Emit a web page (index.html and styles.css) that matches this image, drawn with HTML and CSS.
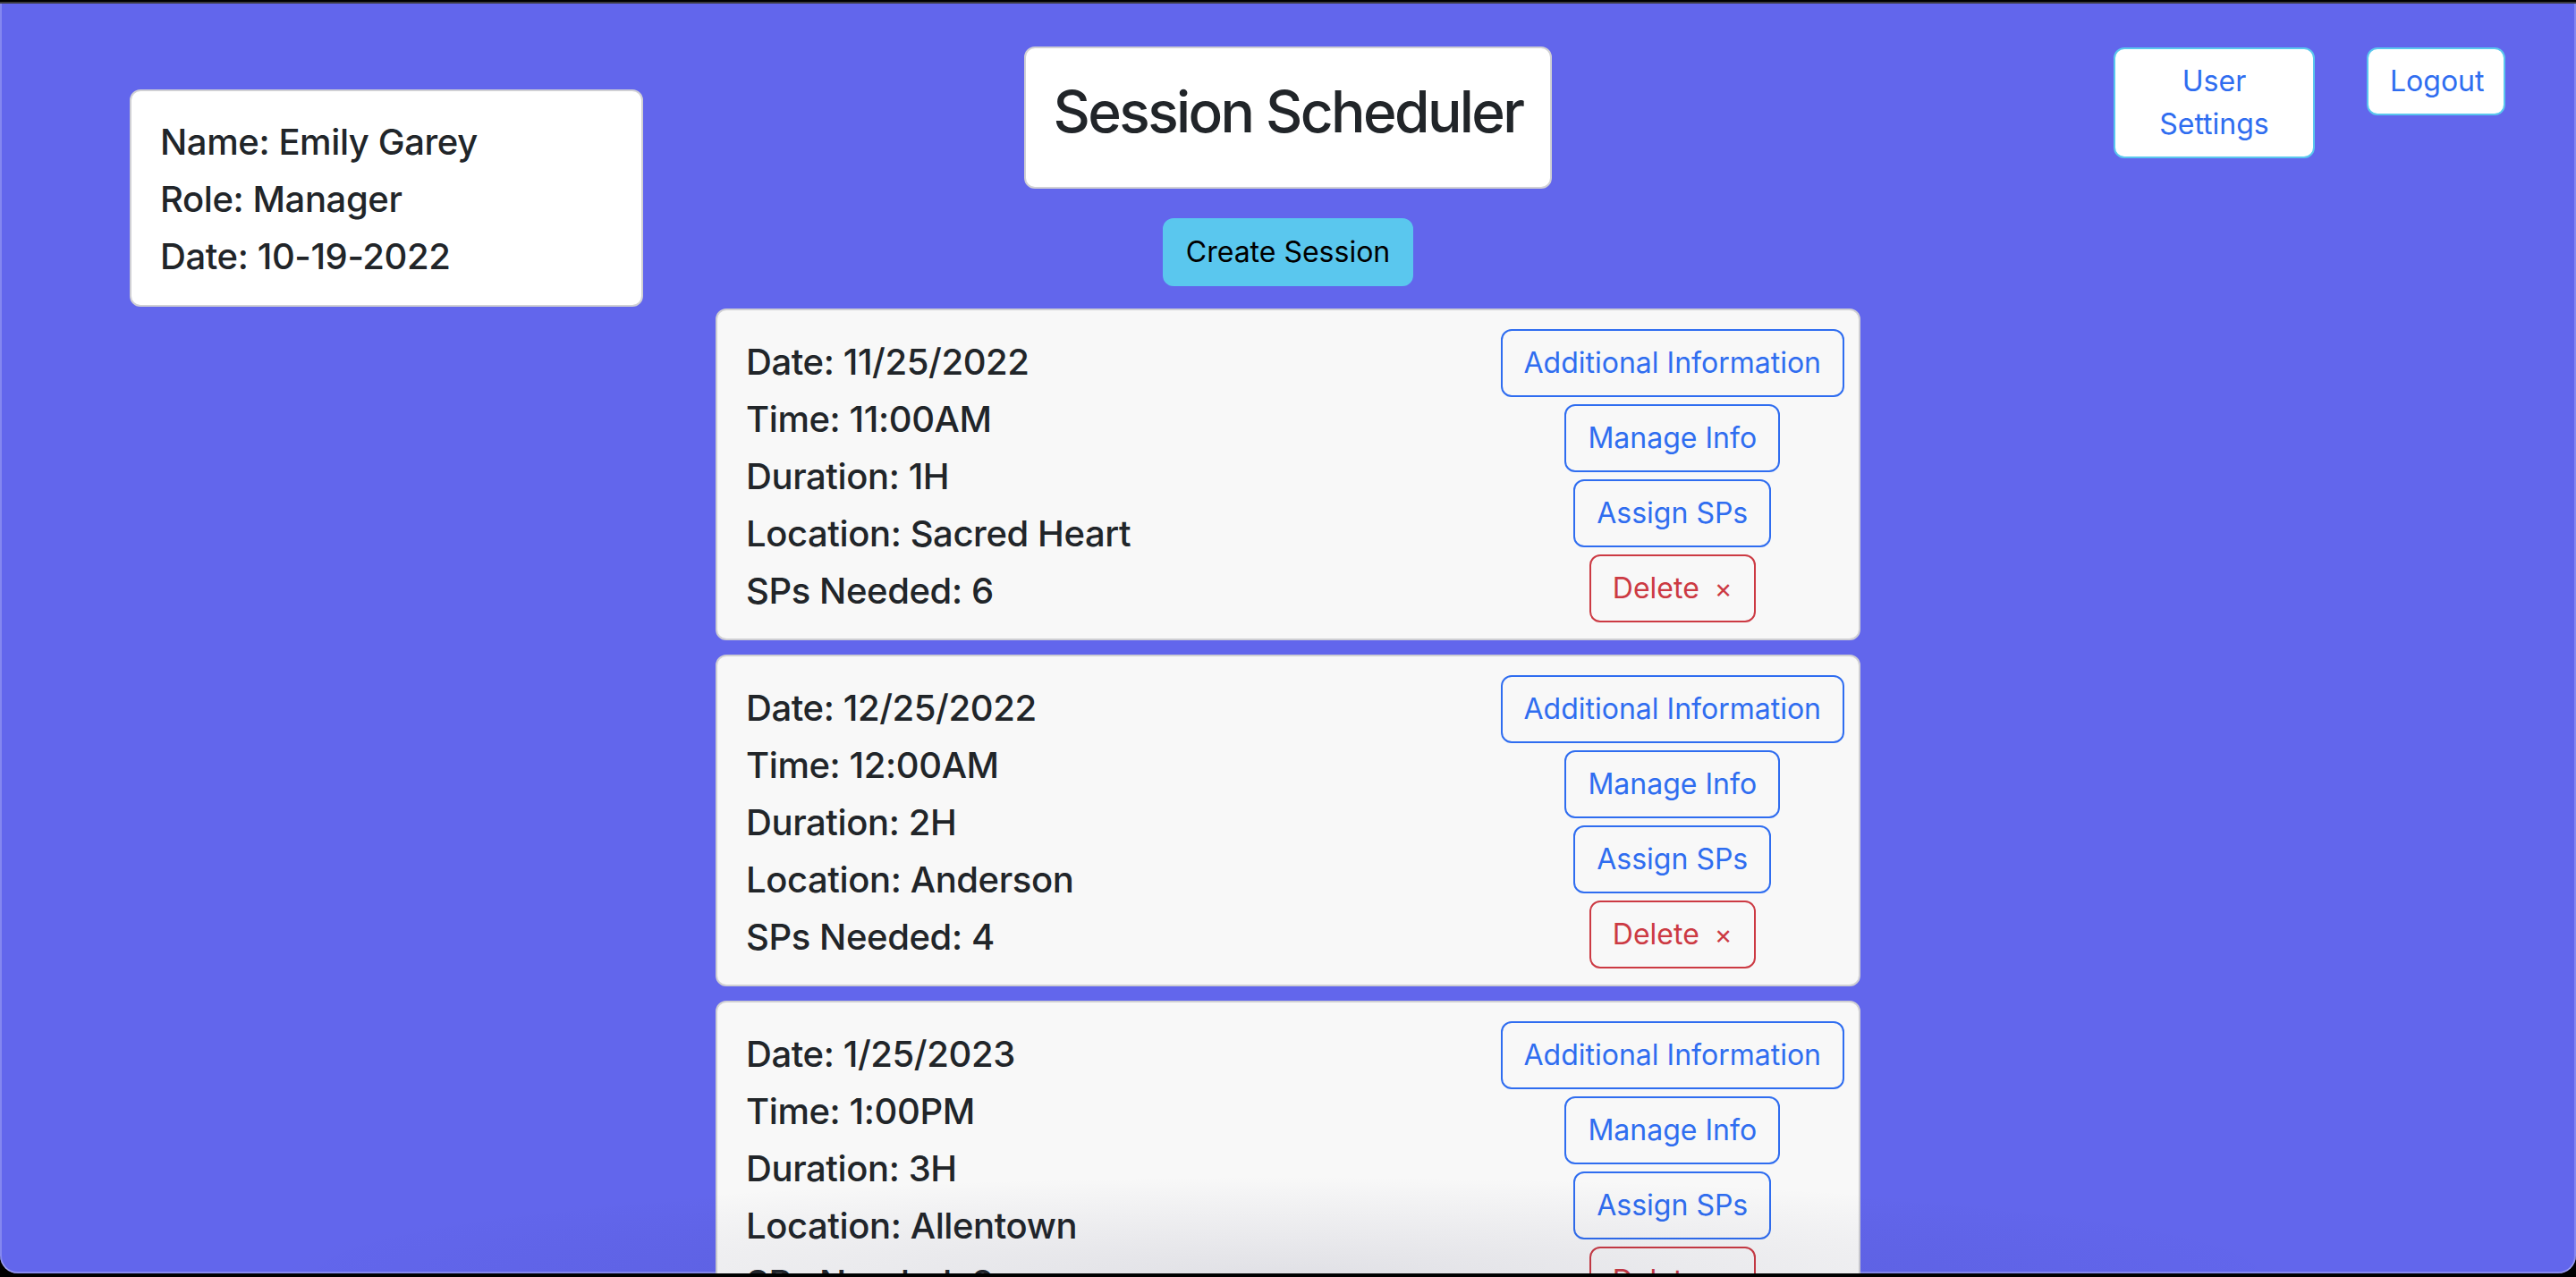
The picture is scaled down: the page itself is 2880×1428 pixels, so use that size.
FILE: index.html
```html
<!DOCTYPE html>
<html lang="en">
<head>
<meta charset="utf-8">
<title>Session Scheduler</title>
<link rel="stylesheet" href="styles.css">
</head>
<body>
<div class="frame">
  <div class="window">
    <div class="layout">
      <aside class="col-left">
        <div class="info-card">
          <h5>Name: Emily Garey</h5>
          <h5>Role: Manager</h5>
          <h5>Date: 10-19-2022</h5>
        </div>
      </aside>
      <main class="col-main">
        <div class="title-box"><h2>Session Scheduler</h2></div>
        <button class="btn btn-info create">Create Session</button>
        <div class="sessions">
          <div class="session">
            <div class="details">
              <h5>Date: 11/25/2022</h5>
              <h5>Time: 11:00AM</h5>
              <h5>Duration: 1H</h5>
              <h5>Location: Sacred Heart</h5>
              <h5>SPs Needed: 6</h5>
            </div>
            <div class="actions">
              <button class="btn btn-outline">Additional Information</button>
              <button class="btn btn-outline">Manage Info</button>
              <button class="btn btn-outline">Assign SPs</button>
              <button class="btn btn-danger">Delete <span class="x">×</span></button>
            </div>
          </div>
          <div class="session">
            <div class="details">
              <h5>Date: 12/25/2022</h5>
              <h5>Time: 12:00AM</h5>
              <h5>Duration: 2H</h5>
              <h5>Location: Anderson</h5>
              <h5>SPs Needed: 4</h5>
            </div>
            <div class="actions">
              <button class="btn btn-outline">Additional Information</button>
              <button class="btn btn-outline">Manage Info</button>
              <button class="btn btn-outline">Assign SPs</button>
              <button class="btn btn-danger">Delete <span class="x">×</span></button>
            </div>
          </div>
          <div class="session">
            <div class="details">
              <h5>Date: 1/25/2023</h5>
              <h5>Time: 1:00PM</h5>
              <h5>Duration: 3H</h5>
              <h5>Location: Allentown</h5>
              <h5>SPs Needed: 8</h5>
            </div>
            <div class="actions">
              <button class="btn btn-outline">Additional Information</button>
              <button class="btn btn-outline">Manage Info</button>
              <button class="btn btn-outline">Assign SPs</button>
              <button class="btn btn-danger">Delete <span class="x">×</span></button>
            </div>
          </div>
        </div>
      </main>
      <nav class="col-right">
        <button class="btn btn-nav settings">User Settings</button>
        <button class="btn btn-nav logout">Logout</button>
      </nav>
    </div>
  </div>
</div>
</body>
</html>
```
FILE: styles.css
```css
* { box-sizing: border-box; }
html, body {
  margin: 0;
  padding: 0;
  background: #000;
  font-family: Inter, "Noto Sans", sans-serif;
  color: #212529;
}
.frame {
  height: 1428px;
  padding-top: 2px;
  background: #000;
  overflow: hidden;
}
.window {
  position: relative;
  height: 1422px;
  border-top: 2px solid #3a3a3e;
  border-radius: 0 0 20px 20px;
  background: #6266ec;
  overflow: hidden;
  box-shadow: inset 2px 0 0 rgba(255,255,255,0.22), inset -2px 0 0 rgba(255,255,255,0.22), inset 0 -2px 0 rgba(255,255,255,0.25);
}
.window::after {
  content: "";
  position: absolute;
  left: 10%;
  right: 10%;
  bottom: 0;
  height: 110px;
  background: radial-gradient(ellipse at 50% 100%, rgba(20,20,70,0.1), rgba(20,20,70,0) 70%);
  pointer-events: none;
}
.layout {
  display: grid;
  grid-template-columns: 720px 1440px 720px;
}
h5 {
  margin: 0 0 16px;
  font-size: 40px;
  line-height: 48px;
  font-weight: 500;
  letter-spacing: -0.4px;
}
h2 {
  margin: 0 0 16px;
  font-size: 64px;
  line-height: 77px;
  font-weight: 500;
  letter-spacing: -2.6px;
}
.col-left { padding: 96px 0 0 145px; }
.info-card {
  width: 574px;
  background: #fff;
  border: 2px solid #d0d0d4;
  border-radius: 12px;
  padding: 33px 32px 14px;
}
.col-main {
  display: flex;
  flex-direction: column;
  align-items: center;
  padding-top: 48px;
}
.title-box {
  width: 590px;
  background: #fff;
  border: 2px solid #d0d0d4;
  border-radius: 12px;
  padding: 32px 0 30px;
  text-align: center;
}
.btn {
  font-family: inherit;
  font-size: 32px;
  line-height: 48px;
  padding: 12px 24px;
  border: 2px solid transparent;
  border-radius: 12px;
  background: transparent;
  cursor: pointer;
}
.create {
  margin-top: 33px;
  background: #5ac7ee;
  border-color: #5ac7ee;
  color: #000;
}
.sessions {
  margin-top: 25px;
  width: 1280px;
  display: flex;
  flex-direction: column;
  gap: 16px;
}
.session {
  display: flex;
  justify-content: space-between;
  background: #f8f8f8;
  border: 2px solid #cfcfd3;
  border-radius: 12px;
  padding: 17px 16px 14px;
}
.details { padding: 17px 0 0 16px; }
.details h5:last-child { margin-bottom: 0; }
.actions {
  display: flex;
  flex-direction: column;
  align-items: center;
}
.actions .btn { margin: 4px 0; }
.btn-outline {
  color: #2f6df0;
  border-color: #2f6df0;
}
.btn-danger {
  color: #cc3a43;
  border-color: #cc3a43;
}
.x {
  margin-left: 8px;
  font-size: 30px;
  line-height: 1;
}
.col-right {
  display: flex;
  align-items: flex-start;
  padding: 49px 0 0 203px;
  gap: 58px;
}
.btn-nav {
  background: #fff;
  border-color: #5ac7ee;
  color: #2f6df0;
}
.settings { width: 225px; }
.logout { width: 155px; }
```
